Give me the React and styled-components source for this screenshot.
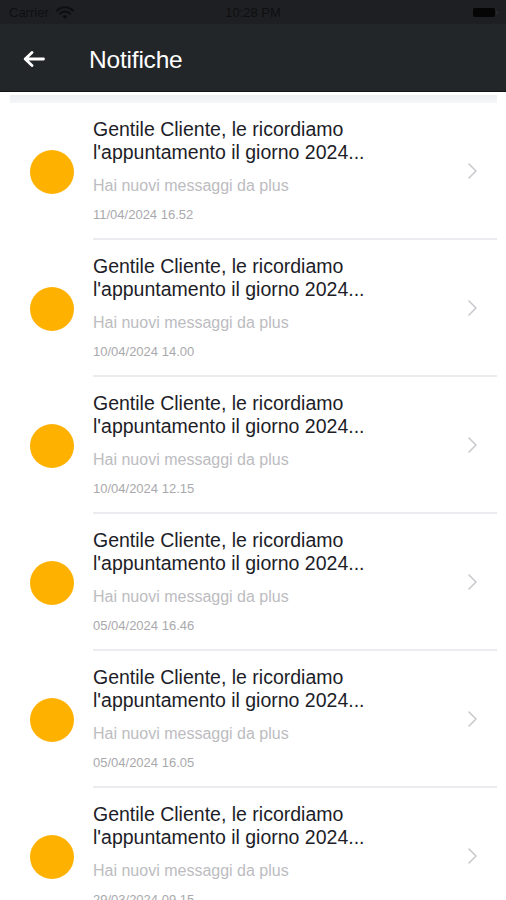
import React from 'react';
import styled, { createGlobalStyle } from 'styled-components';

const GlobalStyle = createGlobalStyle`
  html, body {
    margin: 0;
    padding: 0;
    background: #ffffff;
    overflow: hidden;
  }
  body {
    font-family: "Liberation Sans", Arial, sans-serif;
  }
`;

const Screen = styled.div`
  width: 506px;
  height: 900px;
  background: #ffffff;
  overflow: hidden;
`;

const StatusBar = styled.div`
  height: 24px;
  background: #1e1f22;
  display: flex;
  align-items: center;
  justify-content: space-between;
  padding: 0 9px;
  position: relative;
  color: #0e0f11;
  font-size: 13px;
`;

const Carrier = styled.div`
  display: flex;
  align-items: center;
  gap: 7px;
`;

const Clock = styled.div`
  position: absolute;
  left: 0;
  right: 0;
  text-align: center;
  font-size: 13px;
  pointer-events: none;
`;

const Battery = styled.div`
  width: 22px;
  height: 9px;
  background: #050505;
  border-radius: 2px;
  position: relative;
  margin-right: 2px;

  &::after {
    content: "";
    position: absolute;
    right: -3px;
    top: 3px;
    width: 2px;
    height: 3px;
    background: #2a2b2e;
  }
`;

const Header = styled.div`
  height: 67px;
  background: #232629;
  border-bottom: 1px solid #121315;
  display: flex;
  align-items: center;
  padding-left: 23px;
`;

const BackButton = styled.div`
  width: 22px;
  height: 16px;
  display: flex;
  margin-right: 44px;
  margin-top: 2px;
`;

const Title = styled.div`
  color: #ffffff;
  font-size: 24.5px;
  letter-spacing: -0.2px;
  margin-top: 4px;
`;

const List = styled.div`
  padding-top: 3px;
`;

const Shade = styled.div`
  height: 8px;
  margin: 0 9px 0 10px;
  background: linear-gradient(#eceef2, #f5f6f8);
`;

const Row = styled.div`
  display: flex;
  align-items: center;
  padding: 0 9px 0 30px;
`;

const Dot = styled.div`
  width: 44px;
  height: 44px;
  border-radius: 50%;
  background: #ffb100;
  flex-shrink: 0;
  margin-right: 19px;
`;

const Body = styled.div`
  flex: 1;
  display: flex;
  align-items: center;
  padding: 15px 0 15px;
  border-bottom: 2px solid #ececf0;
`;

const Texts = styled.div`
  flex: 1;
`;

const Heading = styled.div`
  font-size: 19.5px;
  line-height: 23px;
  color: #1d1d28;
`;

const Subtitle = styled.div`
  margin-top: 12px;
  font-size: 16px;
  line-height: 20px;
  color: #bcbcbf;
`;

const Stamp = styled.div`
  margin-top: 11px;
  font-size: 13px;
  line-height: 16px;
  color: #a9a9ad;
`;

const Chevron = styled.div`
  width: 9px;
  height: 16px;
  display: flex;
  margin-right: 20px;
`;

const notifications = [
  '11/04/2024 16.52',
  '10/04/2024 14.00',
  '10/04/2024 12.15',
  '05/04/2024 16.46',
  '05/04/2024 16.05',
  '29/03/2024 09.15',
];

const Wifi = () => (
  <svg width="18" height="13" viewBox="0 0 18 13">
    <path d="M1 4.5 A11.5 11.5 0 0 1 17 4.5" stroke="#0e0f11" strokeWidth="2.2" fill="none" strokeLinecap="round" />
    <path d="M4 7.6 A7 7 0 0 1 14 7.6" stroke="#0e0f11" strokeWidth="2.2" fill="none" strokeLinecap="round" />
    <path d="M6.6 10.4 A3.2 3.2 0 0 1 11.4 10.4 L9 12.8 Z" fill="#0e0f11" />
  </svg>
);

const App = () => {
  return (
    <Screen>
      <GlobalStyle />
      <StatusBar>
        <Carrier>
          <span>Carrier</span>
          <Wifi />
        </Carrier>
        <Clock>10:28 PM</Clock>
        <Battery />
      </StatusBar>
      <Header>
        <BackButton>
          <svg width="22" height="16" viewBox="0 0 22 16">
            <path d="M9 1.5 L2.2 8 L9 14.5 M2.2 8 H20.5" stroke="#ffffff" strokeWidth="2.8" fill="none" strokeLinecap="round" strokeLinejoin="round" />
          </svg>
        </BackButton>
        <Title>Notifiche</Title>
      </Header>
      <List>
        <Shade />
        {notifications.map((date) => (
          <Row key={date}>
            <Dot />
            <Body>
              <Texts>
                <Heading>
                  Gentile Cliente, le ricordiamo
                  <br />
                  l'appuntamento il giorno 2024...
                </Heading>
                <Subtitle>Hai nuovi messaggi da plus</Subtitle>
                <Stamp>{date}</Stamp>
              </Texts>
              <Chevron>
                <svg width="9" height="16" viewBox="0 0 9 16">
                  <path d="M1 1 L8 8 L1 15" stroke="#c8c8cc" strokeWidth="1.5" fill="none" strokeLinecap="round" strokeLinejoin="round" />
                </svg>
              </Chevron>
            </Body>
          </Row>
        ))}
      </List>
    </Screen>
  );
};

export default App;
